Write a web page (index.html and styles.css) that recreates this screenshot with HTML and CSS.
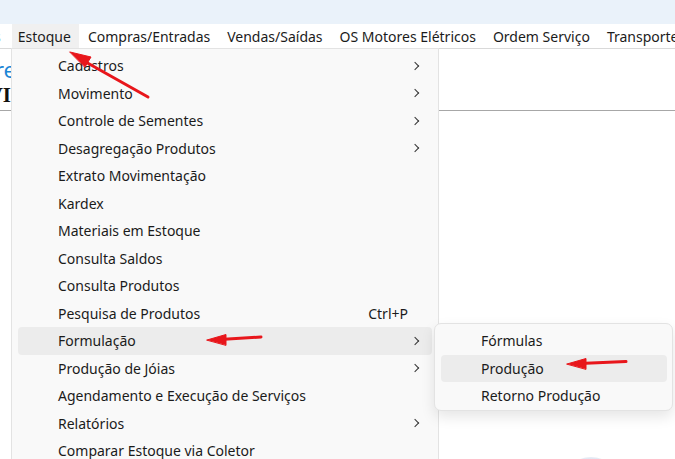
FILE: index.html
```html
<!DOCTYPE html>
<html lang="pt-BR">
<head>
<meta charset="utf-8">
<title>Menu Estoque</title>
<link rel="stylesheet" href="styles.css">
</head>
<body>
<div class="titlebar"></div>
<nav class="menubar">
  <span class="mbi cut">s</span>
  <span class="mbi active">Estoque</span>
  <span class="mbi">Compras/Entradas</span>
  <span class="mbi">Vendas/Saídas</span>
  <span class="mbi">OS Motores Elétricos</span>
  <span class="mbi">Ordem Serviço</span>
  <span class="mbi">Transporte</span>
</nav>
<main class="content">
  <div class="peek">
    <div class="peek-inner">
      <div class="t-blue">Cadastre</div>
      <div class="t-black">MOVI</div>
    </div>
  </div>
  <div class="rule"></div>
  <div class="logo-row"><div class="logo"></div></div>
</main>

<div class="menu">
  <div class="item"><span class="label">Cadastros</span><span class="chev"></span></div>
  <div class="item"><span class="label">Movimento</span><span class="chev"></span></div>
  <div class="item"><span class="label">Controle de Sementes</span><span class="chev"></span></div>
  <div class="item"><span class="label">Desagregação Produtos</span><span class="chev"></span></div>
  <div class="item"><span class="label">Extrato Movimentação</span></div>
  <div class="item"><span class="label">Kardex</span></div>
  <div class="item"><span class="label">Materiais em Estoque</span></div>
  <div class="item"><span class="label">Consulta Saldos</span></div>
  <div class="item"><span class="label">Consulta Produtos</span></div>
  <div class="item"><span class="label">Pesquisa de Produtos</span><span class="shortcut">Ctrl+P</span></div>
  <div class="item hl"><span class="label">Formulação</span><span class="chev"></span></div>
  <div class="item"><span class="label">Produção de Jóias</span><span class="chev"></span></div>
  <div class="item"><span class="label">Agendamento e Execução de Serviços</span></div>
  <div class="item"><span class="label">Relatórios</span><span class="chev"></span></div>
  <div class="item"><span class="label">Comparar Estoque via Coletor</span></div>
</div>

<div class="submenu">
  <div class="item"><span class="label">Fórmulas</span></div>
  <div class="item hl"><span class="label">Produção</span></div>
  <div class="item"><span class="label">Retorno Produção</span></div>
</div>

<svg class="annot" width="675" height="459" viewBox="0 0 675 459">
  <g fill="#e8161b" stroke="#e8161b" stroke-linecap="round">
    <line x1="148" y1="97" x2="84" y2="61" stroke-width="3"/>
    <polygon points="70,52 91,57 85,67" stroke-width="1"/>
    <line x1="261" y1="337" x2="220" y2="339.5" stroke-width="3"/>
    <polygon points="207,340 226,334.5 226,345" stroke-width="1"/>
    <line x1="626" y1="361.5" x2="580" y2="363.5" stroke-width="3"/>
    <polygon points="567,364 586,358.5 586,369" stroke-width="1"/>
  </g>
</svg>
</body>
</html>
```
FILE: styles.css
```css
* { box-sizing: border-box; }
html, body { margin: 0; padding: 0; }
body {
  width: 675px;
  height: 459px;
  overflow: hidden;
  position: relative;
  background: #ffffff;
  font-family: "Noto Sans", "Open Sans", sans-serif;
  font-size: 14px;
  color: #1b1b1b;
}
.titlebar {
  height: 24px;
  background: #eaf2fa;
}
.menubar {
  height: 25px;
  display: flex;
  align-items: stretch;
  background: #ffffff;
  border-bottom: 1px solid #d9d9d9;
  margin-left: -14px;
  white-space: nowrap;
}
.mbi {
  display: flex;
  align-items: center;
  padding: 0 8px 0 8px;
  margin-right: 1px;
}
.mbi.cut { color: #3a6ea5; padding-right: 10px; }
.mbi.active { background: #f0f0f0; padding-left: 6px; padding-right: 8px; }

.content {
  position: relative;
}
.peek {
  width: 16px;
  height: 61px;
  overflow: hidden;
  display: flex;
  justify-content: flex-end;
}
.peek-inner {
  flex: none;
  padding-top: 8px;
}
.t-blue {
  color: #1d86d6;
  font-size: 22px;
  line-height: 25px;
  text-align: right;
}
.t-black {
  color: #111;
  font-weight: 700;
  font-family: "Liberation Serif", serif;
  font-size: 21px;
  line-height: 26px;
  text-align: right;
  margin-right: 5px;
}
.rule {
  height: 1px;
  background: #a7a7a7;
}
.logo-row {
  display: flex;
  justify-content: flex-start;
  padding: 346px 0 0 573px;
}
.logo {
  width: 36px;
  height: 20px;
  border-radius: 50%;
  background: radial-gradient(ellipse at center, #9fb2d6 0%, #cdd7ea 60%, #ffffff 100%);
  opacity: 0.6;
}

.menu {
  position: absolute;
  left: 11px;
  top: 48px;
  width: 428px;
  height: 420px;
  background: #f9f9f9;
  border: 1px solid #e3e3e3;
  padding: 3px 6px 0 6px;
}
.item {
  height: 27.5px;
  display: flex;
  align-items: center;
  padding-left: 40px;
  padding-right: 12px;
  border-radius: 4px;
  white-space: nowrap;
}
.item.hl { background: #ececec; }
.label { flex: 1; }
.shortcut { margin-right: 12px; }
.chev {
  width: 6px;
  height: 6px;
  border-right: 1.3px solid #333;
  border-top: 1.3px solid #333;
  transform: rotate(45deg);
  margin-right: 2px;
}

.submenu {
  position: absolute;
  left: 434px;
  top: 323px;
  width: 239px;
  height: 88px;
  background: #f9f9f9;
  border: 1px solid #e3e3e3;
  border-radius: 7px;
  padding: 3px 5px 0 6px;
  box-shadow: 0 6px 14px rgba(0,0,0,0.10);
}

.annot {
  position: absolute;
  left: 0;
  top: 0;
  pointer-events: none;
}
```
